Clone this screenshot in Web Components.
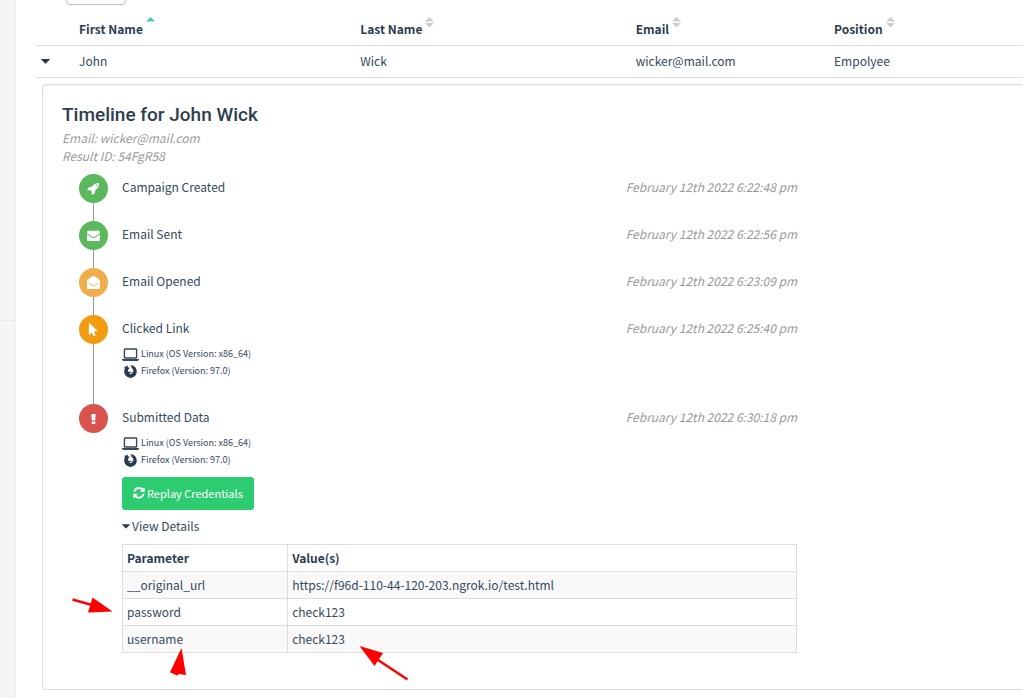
<!DOCTYPE html>
<html lang="en">
<head>
<meta charset="utf-8">
<title>Campaign Results</title>
<style>
    body {
        margin: 0;
        background-color: #fff;
        color: #34495e;
        font-family: "Noto Sans CJK SC", "Noto Sans", sans-serif;
        font-size: 12px;
        line-height: 20px;
        overflow: hidden;
    }
</style>
</head>
<body>

<results-page>
    <results-table>
        <result-timeline name="John Wick" email="wicker@mail.com" rid="54FgR58">
            <timeline-event icon="rocket" color="#5cb85c" time="February 12th 2022 6:22:48 pm">Campaign Created</timeline-event>
            <timeline-event icon="envelope" color="#5cb85c" time="February 12th 2022 6:22:56 pm">Email Sent</timeline-event>
            <timeline-event icon="open" color="#f0ad4e" time="February 12th 2022 6:23:09 pm">Email Opened</timeline-event>
            <timeline-event icon="pointer" color="#f39c12" time="February 12th 2022 6:25:40 pm">Clicked Link
                <device-info slot="extra" os="Linux (OS Version: x86_64)" browser="Firefox (Version: 97.0)"></device-info>
            </timeline-event>
            <timeline-event icon="exclamation" color="#d9534f" time="February 12th 2022 6:30:18 pm" last>Submitted Data
                <device-info slot="extra" os="Linux (OS Version: x86_64)" browser="Firefox (Version: 97.0)"></device-info>
                <submitted-details slot="extra"></submitted-details>
            </timeline-event>
        </result-timeline>
    </results-table>
</results-page>

<template id="results-page-template">
    <style>
        :host {
            display: grid;
            grid-template-columns: 16px 1fr;
            min-height: 100vh;
        }

        .sidebar {
            background-color: #f5f5f5;
            border-right: 1px solid #eee;
        }

        .sidebar hr {
            margin: 320px 0 0;
            border: 0;
            border-top: 1px solid #eaeaea;
        }

        main {
            padding-left: 20px;
            min-width: 0;
        }

        select {
            display: block;
            box-sizing: border-box;
            width: 60px;
            height: 30px;
            margin: -25px 0 9px 30px;
            border: 1px solid #bdc3c7;
            border-radius: 4px;
            background-color: #fff;
            appearance: none;
        }
    </style>
    <nav class="sidebar"><hr></nav>
    <main>
        <select aria-label="Entries per page"></select>
        <slot></slot>
    </main>
</template>

<template id="results-table-template">
    <style>
        :host {
            display: block;
        }

        table {
            width: 100%;
            table-layout: fixed;
            border-collapse: collapse;
        }

        col.toggle { width: 43px; }
        col.first { width: 28.5%; }
        col.last { width: 27.9%; }
        col.email { width: 20.1%; }

        th, td {
            padding: 5px 0 6px;
            text-align: left;
            border-bottom: 1px solid #ddd;
        }

        th {
            padding: 3px 0 6px;
            color: #2c3e50;
        }

        th button {
            display: flex;
            align-items: flex-start;
            gap: 3px;
            padding: 0;
            border: 0;
            background: none;
            color: inherit;
            font: inherit;
        }

        th span {
            padding-top: 2px;
        }

        .toggle-button {
            display: block;
            padding: 0 5px;
            border: 0;
            background: none;
        }

        td svg {
            display: block;
        }

        .detail {
            padding: 6px 0 0 6px;
            border: 0;
        }
    </style>
    <table>
        <colgroup><col class="toggle"><col class="first"><col class="last"><col class="email"><col></colgroup>
        <thead>
            <tr>
                <th></th>
                <th><button><span>First Name</span><sort-arrows dir="up"></sort-arrows></button></th>
                <th><button><span>Last Name</span><sort-arrows></sort-arrows></button></th>
                <th><button><span>Email</span><sort-arrows></sort-arrows></button></th>
                <th><button><span>Position</span><sort-arrows></sort-arrows></button></th>
            </tr>
        </thead>
        <tbody>
            <tr>
                <td>
                    <button class="toggle-button" aria-label="Toggle timeline">
                        <svg width="9" height="5" viewBox="0 0 9 5"><path d="M.4 0h8.2q.5.3 0 .8L4.9 4.5q-.4.4-.8 0L.4.8Q-.1.3.4 0z" fill="#283b4d"/></svg>
                    </button>
                </td>
                <td>John</td>
                <td>Wick</td>
                <td>wicker@mail.com</td>
                <td>Empolyee</td>
            </tr>
            <tr><td class="detail" colspan="5"><slot></slot></td></tr>
        </tbody>
    </table>
</template>

<template id="result-timeline-template">
    <style>
        :host {
            display: block;
            padding: 18px 0 36px 19px;
            border: 1px solid #ddd;
            border-right: 0;
            border-radius: 4px 0 0 4px;
            box-shadow: inset 0 1px 1px rgba(0, 0, 0, .05);
        }

        h4 {
            margin: 0 0 2px;
            color: #2c3e50;
            font: 500 19px/24px Roboto, sans-serif;
        }

        p {
            margin: 0;
            color: #999;
            font-style: italic;
            line-height: 18px;
        }

        .graph {
            box-sizing: border-box;
            width: 76.5%;
            padding: 9px 0 0 17px;
        }
    </style>
    <h4></h4>
    <p class="email"></p>
    <p class="rid"></p>
    <div class="graph"><slot></slot></div>
</template>

<template id="timeline-event-template">
    <style>
        :host {
            display: grid;
            grid-template-columns: 29px 1fr;
            column-gap: 14px;
            min-height: 47px;
        }

        .rail {
            display: flex;
            flex-direction: column;
            align-items: center;
        }

        .icon {
            display: flex;
            align-items: center;
            justify-content: center;
            width: 29px;
            height: 29px;
            border-radius: 50%;
        }

        .line {
            flex-grow: 1;
            width: 1px;
            background-color: #999;
        }

        :host([last]) .line {
            display: none;
        }

        .head {
            display: flex;
            justify-content: space-between;
            line-height: 25px;
        }

        time {
            color: #999;
            font-style: italic;
        }
    </style>
    <div class="rail">
        <div class="icon"></div>
        <div class="line"></div>
    </div>
    <div>
        <div class="head"><span><slot></slot></span><time></time></div>
        <slot name="extra"></slot>
    </div>
</template>

<template id="device-info-template">
    <style>
        :host {
            display: block;
            padding: 5px 0 25px;
            font-size: 9px;
            line-height: 17px;
        }

        :host(:not(:last-child)) {
            padding-bottom: 9px;
        }

        div {
            display: grid;
            grid-template-columns: 17px auto;
            column-gap: 2px;
            align-items: center;
        }

        svg {
            display: block;
            justify-self: center;
            padding-top: 2px;
        }
    </style>
    <div>
        <svg width="17" height="13" viewBox="0 0 17 13"><path d="M3 1h11q.6 0 .6.6v7.8q0 .6-.6.6H3q-.6 0-.6-.6V1.600Q2.400 1 3 1z" fill="none" stroke="#34495e" stroke-width="1.4"/><path d="M0 11h17v.8q-.3 1.100-1.500 1.100h-14Q.3 12.900 0 11.800z" fill="#34495e"/></svg>
        <span class="os"></span>
    </div>
    <div>
        <svg width="13" height="13" viewBox="0 0 13 13"><path d="M.4 2.200Q.9 1 1.200.8q0 .8.4 1.300Q2.600.6 4.200.2 3.500.9 3.700 2q.4.5 1.500.5.7.2.2.8l-1 .9q.2 1.100-.6 1.300.1 1.500 1.700 1.400 1.100-.5 1.900.1.3.6-.9 1-1 .7-2.200.3Q6 9.500 7.600 8.700q1.200-1 1-2.500.6.3.8 1.100.4-2.200-1-3.700Q7.200 3 7 2.300q1-.2 1.500.3Q7.600 1.200 6 1 6.900.2 8.300.4q2 .4 3.100 2 1.400 1.900 1.400 4.200 0 2.700-1.800 4.500T6.500 12.900q-2.700 0-4.500-1.800T.2 6.600Q0 4.400 1 3.400.4 2.800.4 2.200z" fill="#283b4d"/></svg>
        <span class="browser"></span>
    </div>
</template>

<template id="submitted-details-template">
    <style>
        :host {
            display: block;
            position: relative;
        }

        .replay {
            display: flex;
            align-items: center;
            gap: 2px;
            height: 33px;
            padding: 0 11px 2px;
            border: 0;
            border-radius: 3px;
            background-color: #2ecc71;
            color: #fff;
            font: inherit;
            font-size: 11px;
        }

        .view {
            display: flex;
            align-items: center;
            gap: 2px;
            margin: 6px 0 8px;
            padding: 0;
            border: 0;
            background: none;
            color: inherit;
            font: inherit;
        }

        table {
            width: 100%;
            border-collapse: collapse;
        }

        th, td {
            padding: 3px 4px;
            border: 1px solid #ddd;
            text-align: left;
        }

        th {
            color: #2c3e50;
        }

        th:first-child {
            width: 24.5%;
            box-sizing: border-box;
        }

        tbody tr:nth-child(odd) {
            background-color: #f9f9f9;
        }

        .marks {
            position: absolute;
            top: 117px;
            left: -52px;
            pointer-events: none;
        }
    </style>
    <button class="replay">
        <svg width="12" height="12" viewBox="100 120 1600 1600" fill="currentColor"><path d="M1639 1056q0 5-1 7-64 268-268 434.500t-478 166.500q-146 0-282.500-55t-243.500-157l-129 129q-19 19-45 19t-45-19-19-45v-448q0-26 19-45t45-19h448q26 0 45 19t19 45-19 45l-137 137q71 66 161 102t187 36q134 0 250-65t186-179q11-17 53-117 8-23 30-23h192q13 0 22.500 9.500t9.500 22.500zm25-800v448q0 26-19 45t-45 19h-448q-26 0-45-19t-19-45 19-45l138-138q-148-137-349-137-134 0-250 65t-186 179q-11 17-53 117-8 23-30 23h-199q-13 0-22.500-9.500t-9.500-22.500v-7q65-268 270-434.500t480-166.500q146 0 284 55.500t245 156.500l130-129q19-19 45-19t45 19 19 45z"/></svg>
        Replay Credentials
    </button>
    <button class="view">
        <svg width="8" height="5" viewBox="0 0 9 5"><path d="M.4 0h8.2q.5.3 0 .8L4.9 4.5q-.4.4-.8 0L.4.8Q-.1.3.4 0z" fill="#283b4d"/></svg>
        View Details
    </button>
    <table>
        <thead><tr><th>Parameter</th><th>Value(s)</th></tr></thead>
        <tbody>
            <tr><td>__original_url</td><td>https://f96d-110-44-120-203.ngrok.io/test.html</td></tr>
            <tr><td>password</td><td>check123</td></tr>
            <tr><td>username</td><td>check123</td></tr>
        </tbody>
    </table>
    <!-- arrows pointing at the captured values -->
    <svg class="marks" width="345" height="90" viewBox="0 0 345 90" fill="red" stroke="red">
        <path d="M2.500 5.500 22 11" stroke-width="2.5"/>
        <path d="M22.500 3.500 42.500 17.500 18 18.500z" stroke="none"/>
        <path d="M111.500 54 116 81l-7.500-1-1 1.800-3-1.500-4.500-2z" stroke="none"/>
        <path d="M337.500 85.500 305 64" stroke-width="2.5"/>
        <path d="M289.500 52 313 59l-8.500 13z" stroke="none"/>
    </svg>
</template>

<script>
    const icons = {
        rocket: '<svg width="13" height="13" viewBox="0 0 1792 1792" fill="#fff"><path d="M1440 448q0-40-28-68t-68-28-68 28-28 68 28 68 68 28 68-28 28-68zm224-288q0 249-75.500 430.500t-253.500 360.500q-81 80-195 176l-20 379q-2 16-16 26l-384 224q-7 4-16 4-12 0-23-9l-64-64q-13-14-8-32l85-276-281-281-276 85q-3 1-9 1-14 0-23-9l-64-64q-17-19-5-39l224-384q10-14 26-16l379-20q96-114 176-195 188-187 358-258t431-71q14 0 24 9.500t10 22.500z"/></svg>',
        envelope: '<svg width="13" height="13" viewBox="0 0 1792 1792" fill="#fff"><path d="M1792 710v794q0 66-47 113t-113 47h-1472q-66 0-113-47t-47-113v-794q44 49 101 87 362 246 497 345 57 42 92.500 65.500t94.500 48 110 24.500h2q51 0 110-24.500t94.500-48 92.500-65.500q170-123 498-345 57-39 100-87zm0-294q0 79-49 151t-122 123q-376 261-468 325-10 7-42.500 31t-54 38.500-52 32.500-57.500 27-50 9h-2q-23 0-50-9t-57.500-27-52-32.500-54-38.500-42.500-31q-91-64-262-182.500t-205-142.500q-62-42-117-115.500t-55-136.500q0-78 41.500-130t118.500-52h1472q65 0 112.500 47t47.500 113z"/></svg>',
        open: '<svg width="13" height="13" viewBox="0 0 13 13"><path d="M0 4.500Q1 3.300 5 .5q1.500-.9 3 0 4 2.800 5 4v7.300q0 1.200-1.200 1.200H1.200Q0 13 0 11.800z" fill="#fff"/><path d="M2.200 7.200 5.200 9.400q1.300.8 2.600 0l3-2.200" fill="none" stroke="#f0ad4e" stroke-width=".9"/></svg>',
        pointer: '<svg width="13" height="13" viewBox="0 0 1792 1792" fill="#fff"><path d="M1389 1043q31 30 14 69-17 40-59 40h-382l201 476q10 25 0 49t-34 35l-177 75q-25 10-49 0t-35-34l-191-452-312 312q-19 19-45 19-12 0-24-5-40-17-40-59v-1504q0-42 40-59 12-5 24-5 27 0 45 19z"/></svg>',
        exclamation: '<svg width="5" height="12" viewBox="0 0 5 12" fill="#fff"><path d="M.8 1h3.400q.5 0 .5.500L4.200 7q0 .5-.5.500H1.300Q.8 7.500.8 7L.3 1.500Q.3 1 .8 1zM1 8.500h3q.4 0 .4.400v1.700q0 .4-.4.400H1q-.4 0-.4-.4V8.900q0-.4.4-.4z"/></svg>'
    };

    const attach = function(element, id) {
        const shdw = element.attachShadow({mode: 'open'});
        shdw.appendChild(document.getElementById(id).content.cloneNode(true));
        return shdw;
    }

    class SortArrows extends HTMLElement {
        connectedCallback() {
            const up = this.getAttribute('dir') === 'up';
            this.attachShadow({mode: 'open'}).innerHTML = `
                <style>
                    :host { display: block; }
                    svg { display: block; }
                </style>
                <svg width="9" height="11" viewBox="0 0 9 11">
                    <path d="M4.500 0 9 4.500H0z" fill="${up ? '#48c9b0' : '#ccc'}"/>
                    ${up ? '' : '<path d="M0 6h9L4.500 10.500z" fill="#ccc"/>'}
                </svg>`;
        }
    }

    class ResultsPage extends HTMLElement {
        connectedCallback() {
            attach(this, 'results-page-template');
        }
    }

    class ResultsTable extends HTMLElement {
        connectedCallback() {
            attach(this, 'results-table-template');
        }
    }

    class ResultTimeline extends HTMLElement {
        connectedCallback() {
            const shdw = attach(this, 'result-timeline-template');
            shdw.querySelector('h4').textContent = `Timeline for ${this.getAttribute('name')}`;
            shdw.querySelector('.email').textContent = `Email: ${this.getAttribute('email')}`;
            shdw.querySelector('.rid').textContent = `Result ID: ${this.getAttribute('rid')}`;
        }
    }

    class TimelineEvent extends HTMLElement {
        connectedCallback() {
            const shdw = attach(this, 'timeline-event-template');
            const icon = shdw.querySelector('.icon');
            icon.innerHTML = icons[this.getAttribute('icon')];
            icon.style.backgroundColor = this.getAttribute('color');
            shdw.querySelector('time').textContent = this.getAttribute('time');
        }
    }

    class DeviceInfo extends HTMLElement {
        connectedCallback() {
            const shdw = attach(this, 'device-info-template');
            shdw.querySelector('.os').textContent = this.getAttribute('os');
            shdw.querySelector('.browser').textContent = this.getAttribute('browser');
        }
    }

    class SubmittedDetails extends HTMLElement {
        connectedCallback() {
            const shdw = attach(this, 'submitted-details-template');
            const table = shdw.querySelector('table');
            shdw.querySelector('.view').addEventListener('click', () => {
                table.hidden = !table.hidden;
            });
        }
    }

    window.customElements.define('sort-arrows', SortArrows);
    window.customElements.define('results-page', ResultsPage);
    window.customElements.define('results-table', ResultsTable);
    window.customElements.define('result-timeline', ResultTimeline);
    window.customElements.define('timeline-event', TimelineEvent);
    window.customElements.define('device-info', DeviceInfo);
    window.customElements.define('submitted-details', SubmittedDetails);
</script>
</body>
</html>
